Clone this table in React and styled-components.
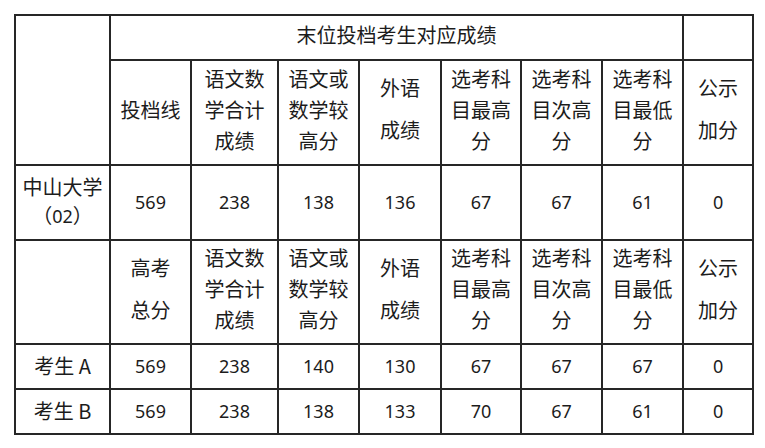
import React from "react";
import styled, { createGlobalStyle } from "styled-components";

const GlobalStyle = createGlobalStyle`
  html, body {
    margin: 0;
    padding: 0;
    background: #ffffff;
  }
  body {
    font-family: "Noto Sans CJK SC", "Noto Sans", sans-serif;
    color: #1c1c1c;
  }
`;

const widths = [95, 81, 87, 81, 82, 80, 81, 81, 70];

const subjectHeads = [
  ["语文数", "学合计", "成绩"],
  ["语文或", "数学较", "高分"],
  ["外语", "成绩"],
  ["选考科", "目最高", "分"],
  ["选考科", "目次高", "分"],
  ["选考科", "目最低", "分"],
  ["公示", "加分"],
];

const students = [
  { name: "考生 A", scores: [569, 238, 140, 130, 67, 67, 67, 0] },
  { name: "考生 B", scores: [569, 238, 138, 133, 70, 67, 61, 0] },
];

const Page = styled.div`
  padding: 14px 0 0 14px;
`;

const Table = styled.table`
  border-collapse: collapse;
  table-layout: fixed;
  width: ${widths.reduce((a, b) => a + b, 0)}px;
`;

const Row = styled.tr`
  height: ${(props) => props.h}px;
`;

const Cell = styled.td`
  border: 2px solid #262626;
  padding: 0 0 ${(props) => props.pb || 0}px;
  text-align: center;
  vertical-align: middle;
  font-size: 20px;
  line-height: 26px;
  white-space: nowrap;
`;

const Line = styled.div`
  line-height: ${(props) => props.lh}px;
`;

const Num = styled.span`
  font-family: "Noto Sans", "Liberation Sans", sans-serif;
  font-size: 18px;
`;

const Head = ({ lines }) => (
  <>
    {lines.map((t) => (
      <Line key={t} lh={lines.length === 3 ? 31 : 42}>
        {t}
      </Line>
    ))}
  </>
);

const App = () => {
  return (
    <Page>
      <GlobalStyle />
      <Table>
        <colgroup>
          {widths.map((w, i) => (
            <col key={i} style={{ width: w }} />
          ))}
        </colgroup>
        <tbody>
          <Row h={45}>
            <Cell rowSpan={2} />
            <Cell colSpan={7} pb={6}>
              末位投档考生对应成绩
            </Cell>
            <Cell />
          </Row>
          <Row h={105}>
            <Cell pb={6}>投档线</Cell>
            {subjectHeads.map((h, i) => (
              <Cell key={i} pb={7}>
                <Head lines={h} />
              </Cell>
            ))}
          </Row>
          <Row h={75}>
            <Cell pb={2}>
              <Line lh={28}>中山大学</Line>
              <Line lh={28}>
                （<Num>02</Num>）
              </Line>
            </Cell>
            {[569, 238, 138, 136, 67, 67, 61, 0].map((n, i) => (
              <Cell key={i} pb={2}>
                <Num>{n}</Num>
              </Cell>
            ))}
          </Row>
          <Row h={104}>
            <Cell />
            <Cell pb={7}>
              <Head lines={["高考", "总分"]} />
            </Cell>
            {subjectHeads.map((h, i) => (
              <Cell key={i} pb={7}>
                <Head lines={h} />
              </Cell>
            ))}
          </Row>
          {students.map((s) => (
            <Row h={45} key={s.name}>
              <Cell pb={2}>{s.name}</Cell>
              {s.scores.map((n, i) => (
                <Cell key={i} pb={2}>
                  <Num>{n}</Num>
                </Cell>
              ))}
            </Row>
          ))}
        </tbody>
      </Table>
    </Page>
  );
};

export default App;
